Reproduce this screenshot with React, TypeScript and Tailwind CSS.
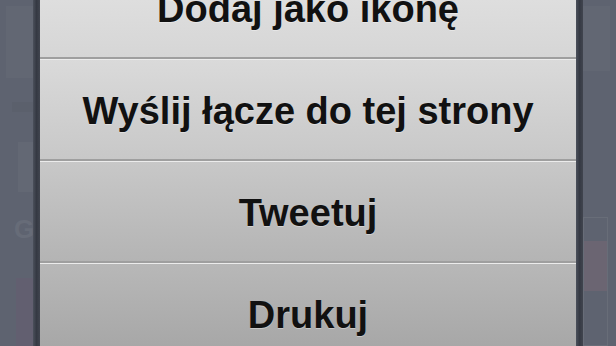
const actions = [
  { label: "Dodaj jako ikonę", bg: "bg-gradient-to-b from-[#e4e4e4] to-[#d6d6d6]" },
  { label: "Wyślij łącze do tej strony", bg: "bg-gradient-to-b from-[#dadada] to-[#c8c8c8]" },
  { label: "Tweetuj", bg: "bg-gradient-to-b from-[#c8c8c8] to-[#b4b4b4]" },
  { label: "Drukuj", bg: "bg-gradient-to-b from-[#b8b8b8] to-[#a4a4a4]" },
];

function Edge() {
  return <div className="w-[7px] shrink-0 bg-gradient-to-r from-[#4b505b] via-[#353943] to-[#41454f]" />;
}

export default function App() {
  return (
    <div className="w-[616px] h-[346px] overflow-hidden flex bg-[#5e6370] font-['Liberation_Sans',Arial,sans-serif]">
      {/* dimmed page behind the sheet */}
      <div className="w-[33px] shrink-0 flex flex-col pt-[6px]">
        <div className="ml-[6px] h-[72px] bg-[#626773]" />
        <div className="ml-[12px] mt-[24px] h-[10px] bg-[#5b606c]" />
        <div className="ml-[18px] mt-[30px] h-[50px] bg-[#636874]" />
        <div className="ml-[14px] mt-[24px] text-[26px] font-bold leading-none text-[#676c78]">Gr</div>
        <div className="ml-[16px] mt-[36px] flex-1 bg-[#625f70]" />
      </div>
      <Edge />

      <div className="w-[536px] shrink-0 flex flex-col -mt-[43px]">
        {actions.map((a, i) => (
          <div
            key={i}
            className={`h-[102px] shrink-0 flex items-center justify-center pt-[5px] border-b-2 border-[#9f9f9f] shadow-[inset_0_1px_0_#ececec] ${a.bg}`}
          >
            <span className="text-[38px] font-bold text-[#111111] [text-shadow:0_1px_0_rgba(255,255,255,0.35)]">
              {a.label}
            </span>
          </div>
        ))}
      </div>

      <Edge />
      <div className="w-[33px] shrink-0 flex flex-col pt-[6px]">
        <div className="mr-[6px] h-[80px] bg-[#626773]" />
        <div className="mt-[146px] mr-[8px] h-[160px] border border-[#686d78] flex flex-col">
          <div className="mt-[23px] h-[50px] bg-[#6b6572]" />
        </div>
      </div>
    </div>
  );
}
